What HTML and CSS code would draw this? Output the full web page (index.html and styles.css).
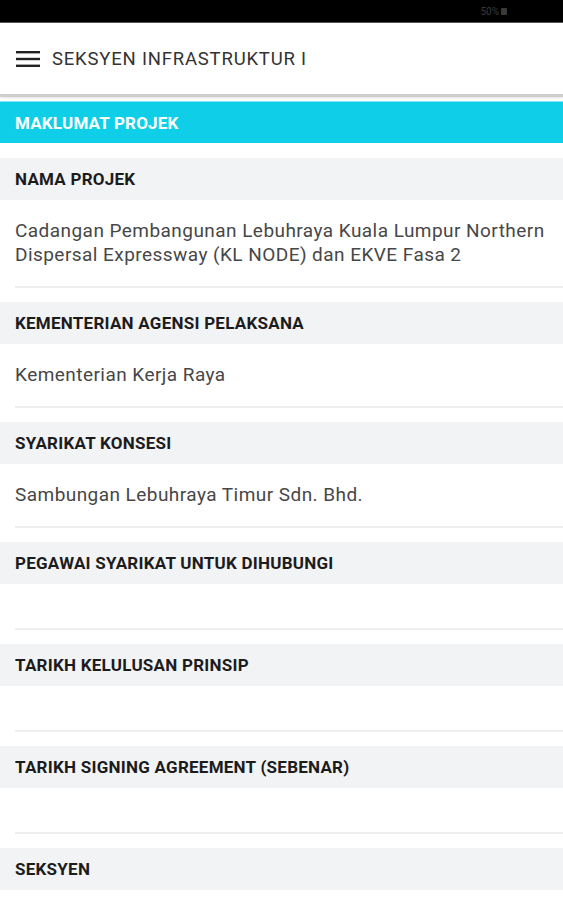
FILE: index.html
```html
<!DOCTYPE html>
<html>
<head>
<meta charset="utf-8">
<link rel="stylesheet" href="styles.css">
</head>
<body>
<div class="statusbar"><span class="status">50% <span class="lock"></span></span></div>
<header class="toolbar">
  <svg class="menu" width="24" height="18" viewBox="0 0 24 18"><rect x="0" y="1" width="24" height="2.4" fill="#222"/><rect x="0" y="7.8" width="24" height="2.4" fill="#222"/><rect x="0" y="14.6" width="24" height="2.4" fill="#222"/></svg>
  <span class="title">SEKSYEN INFRASTRUKTUR I</span>
</header>
<div class="banner">MAKLUMAT PROJEK</div>
<main class="list">
  <section class="field">
    <div class="label">NAMA PROJEK</div>
    <div class="value">Cadangan Pembangunan Lebuhraya Kuala Lumpur Northern Dispersal Expressway (KL NODE) dan EKVE Fasa 2</div>
  </section>
  <section class="field">
    <div class="label">KEMENTERIAN AGENSI PELAKSANA</div>
    <div class="value">Kementerian Kerja Raya</div>
  </section>
  <section class="field">
    <div class="label">SYARIKAT KONSESI</div>
    <div class="value">Sambungan Lebuhraya Timur Sdn. Bhd.</div>
  </section>
  <section class="field">
    <div class="label">PEGAWAI SYARIKAT UNTUK DIHUBUNGI</div>
    <div class="value empty"></div>
  </section>
  <section class="field">
    <div class="label">TARIKH KELULUSAN PRINSIP</div>
    <div class="value empty"></div>
  </section>
  <section class="field">
    <div class="label">TARIKH SIGNING AGREEMENT (SEBENAR)</div>
    <div class="value empty"></div>
  </section>
  <section class="field">
    <div class="label">SEKSYEN</div>
    <div class="value empty"></div>
  </section>
</main>
</body>
</html>
```
FILE: styles.css
```css
html, body {
  margin: 0;
  padding: 0;
  background: #fff;
  font-family: Roboto, "Noto Sans", sans-serif;
  overflow: hidden;
}
.statusbar {
  height: 22px;
  background: #000;
  display: flex;
  justify-content: flex-end;
  align-items: center;
  padding-right: 56px;
  border-bottom: 1px solid #555;
}
.status {
  color: #3a3a3a;
  font-size: 10px;
  display: flex;
  align-items: center;
  gap: 2px;
}
.lock {
  display: inline-block;
  width: 6px;
  height: 7px;
  background: #3a3a3a;
  border-radius: 1px;
}
.toolbar {
  height: 71px;
  display: flex;
  align-items: center;
  padding-left: 16px;
  gap: 12px;
  background: #fff;
  border-bottom: 3px solid #cfcfcf;
  box-shadow: 0 1px 2px rgba(0,0,0,0.12);
}
.menu {
  flex: none;
}
.title {
  font-size: 18.5px;
  color: #333;
  letter-spacing: 0.8px;
}
.banner {
  margin-top: 4px;
  height: 41px;
  background: #0ecfe7;
  color: #fff;
  font-weight: bold;
  font-size: 17px;
  letter-spacing: 0.2px;
  display: flex;
  align-items: center;
  padding-left: 15px;
  border-top: 1px solid #7fe6f3;
}
.list {
  padding-top: 15px;
}
.field {
  margin-bottom: 14px;
}
.label {
  height: 42px;
  background: #f2f3f5;
  display: flex;
  align-items: center;
  padding-left: 15px;
  font-weight: bold;
  font-size: 17px;
  letter-spacing: 0.25px;
  color: #1c1c1c;
}
.value {
  margin-left: 15px;
  padding: 19px 6px 19px 0;
  font-size: 19px;
  letter-spacing: 0.45px;
  line-height: 24px;
  color: #474747;
  border-bottom: 2px solid #eeeeee;
}
.value.empty {
  padding: 0;
  height: 44px;
}
```
